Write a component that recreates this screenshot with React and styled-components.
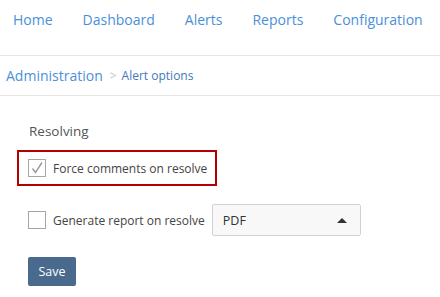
import React from 'react'
import styled, { createGlobalStyle } from 'styled-components'

const Global = createGlobalStyle`
  body {
    margin: 0;
    background: #fff;
    font-family: "Open Sans", "Noto Sans", sans-serif;
  }
`

const Nav = styled.nav`
  display: flex;
  gap: 30px;
  height: 56px;
  padding: 9px 0 0 13px;
  box-sizing: border-box;
  border-bottom: 1px solid #e6e6e6;
  a {
    font-size: 14px;
    line-height: 22px;
    color: #4a8fd8;
    text-decoration: none;
  }
`

const Crumbs = styled.div`
  display: flex;
  align-items: center;
  height: 39px;
  padding-left: 6px;
  border-bottom: 1px solid #e6e6e6;
  .root {
    font-size: 14px;
    color: #4a8fd8;
  }
  .sep {
    color: #c4c4c4;
    font-size: 12px;
    margin: 0 5px 0 7px;
  }
  .leaf {
    font-size: 12px;
    color: #3f78b8;
  }
`

const Content = styled.div`
  padding: 26px 0 0 17px;
`

const Heading = styled.div`
  font-size: 13.5px;
  color: #555;
  padding-left: 12px;
  margin-bottom: 10px;
`

const Row = styled.div`
  display: inline-flex;
  align-items: center;
  gap: 7px;
  height: ${({ $h }) => $h || 32}px;
  padding: 0 8px 0 9px;
  box-sizing: border-box;
  border: 2px solid ${({ $highlight }) => ($highlight ? '#b50000' : 'transparent')};
  margin-top: ${({ $mt }) => $mt || 0}px;
  font-size: 12px;
  color: #444;
`

const Box = styled.span`
  width: 16px;
  height: 16px;
  border: 1px solid #a6a6a6;
  background: #fff;
  display: flex;
  align-items: center;
  justify-content: center;
`

const Select = styled.div`
  display: flex;
  align-items: center;
  justify-content: space-between;
  width: 149px;
  height: 32px;
  box-sizing: border-box;
  padding: 0 13px 0 10px;
  border: 1px solid #d2d2d2;
  border-radius: 2px;
  background: #f8f8f8;
  font-size: 12.5px;
  color: #333;
  .caret {
    width: 0;
    height: 0;
    border-left: 5px solid transparent;
    border-right: 5px solid transparent;
    border-bottom: 5px solid #333;
  }
`

const Button = styled.button`
  display: block;
  margin: 21px 0 0 11px;
  width: 48px;
  height: 29px;
  border: none;
  border-radius: 2px;
  background: #4a6a8d;
  color: #fff;
  font-family: inherit;
  font-size: 12.5px;
  padding: 0;
`

const Check = () => (
  <svg width='14' height='14' viewBox='0 0 14 14'>
    <path d='M2.5 7.5 L5.5 11.5 L12 1.5' fill='none' stroke='#9a9a9a' strokeWidth='1.4' />
  </svg>
)

export default function App () {
  return (
    <>
      <Global />
      <Nav>
        <a href='#'>Home</a>
        <a href='#'>Dashboard</a>
        <a href='#'>Alerts</a>
        <a href='#'>Reports</a>
        <a href='#'>Configuration</a>
      </Nav>
      <Crumbs>
        <span className='root'>Administration</span>
        <span className='sep'>&gt;</span>
        <span className='leaf'>Alert options</span>
      </Crumbs>
      <Content>
        <Heading>Resolving</Heading>
        <div>
          <Row $highlight $h={36}>
            <Box><Check /></Box>
            <span>Force comments on resolve</span>
          </Row>
        </div>
        <div>
          <Row $mt={18} $h={32}>
            <Box />
            <span>Generate report on resolve</span>
            <Select>
              <span>PDF</span>
              <span className='caret' />
            </Select>
          </Row>
        </div>
        <Button>Save</Button>
      </Content>
    </>
  )
}
